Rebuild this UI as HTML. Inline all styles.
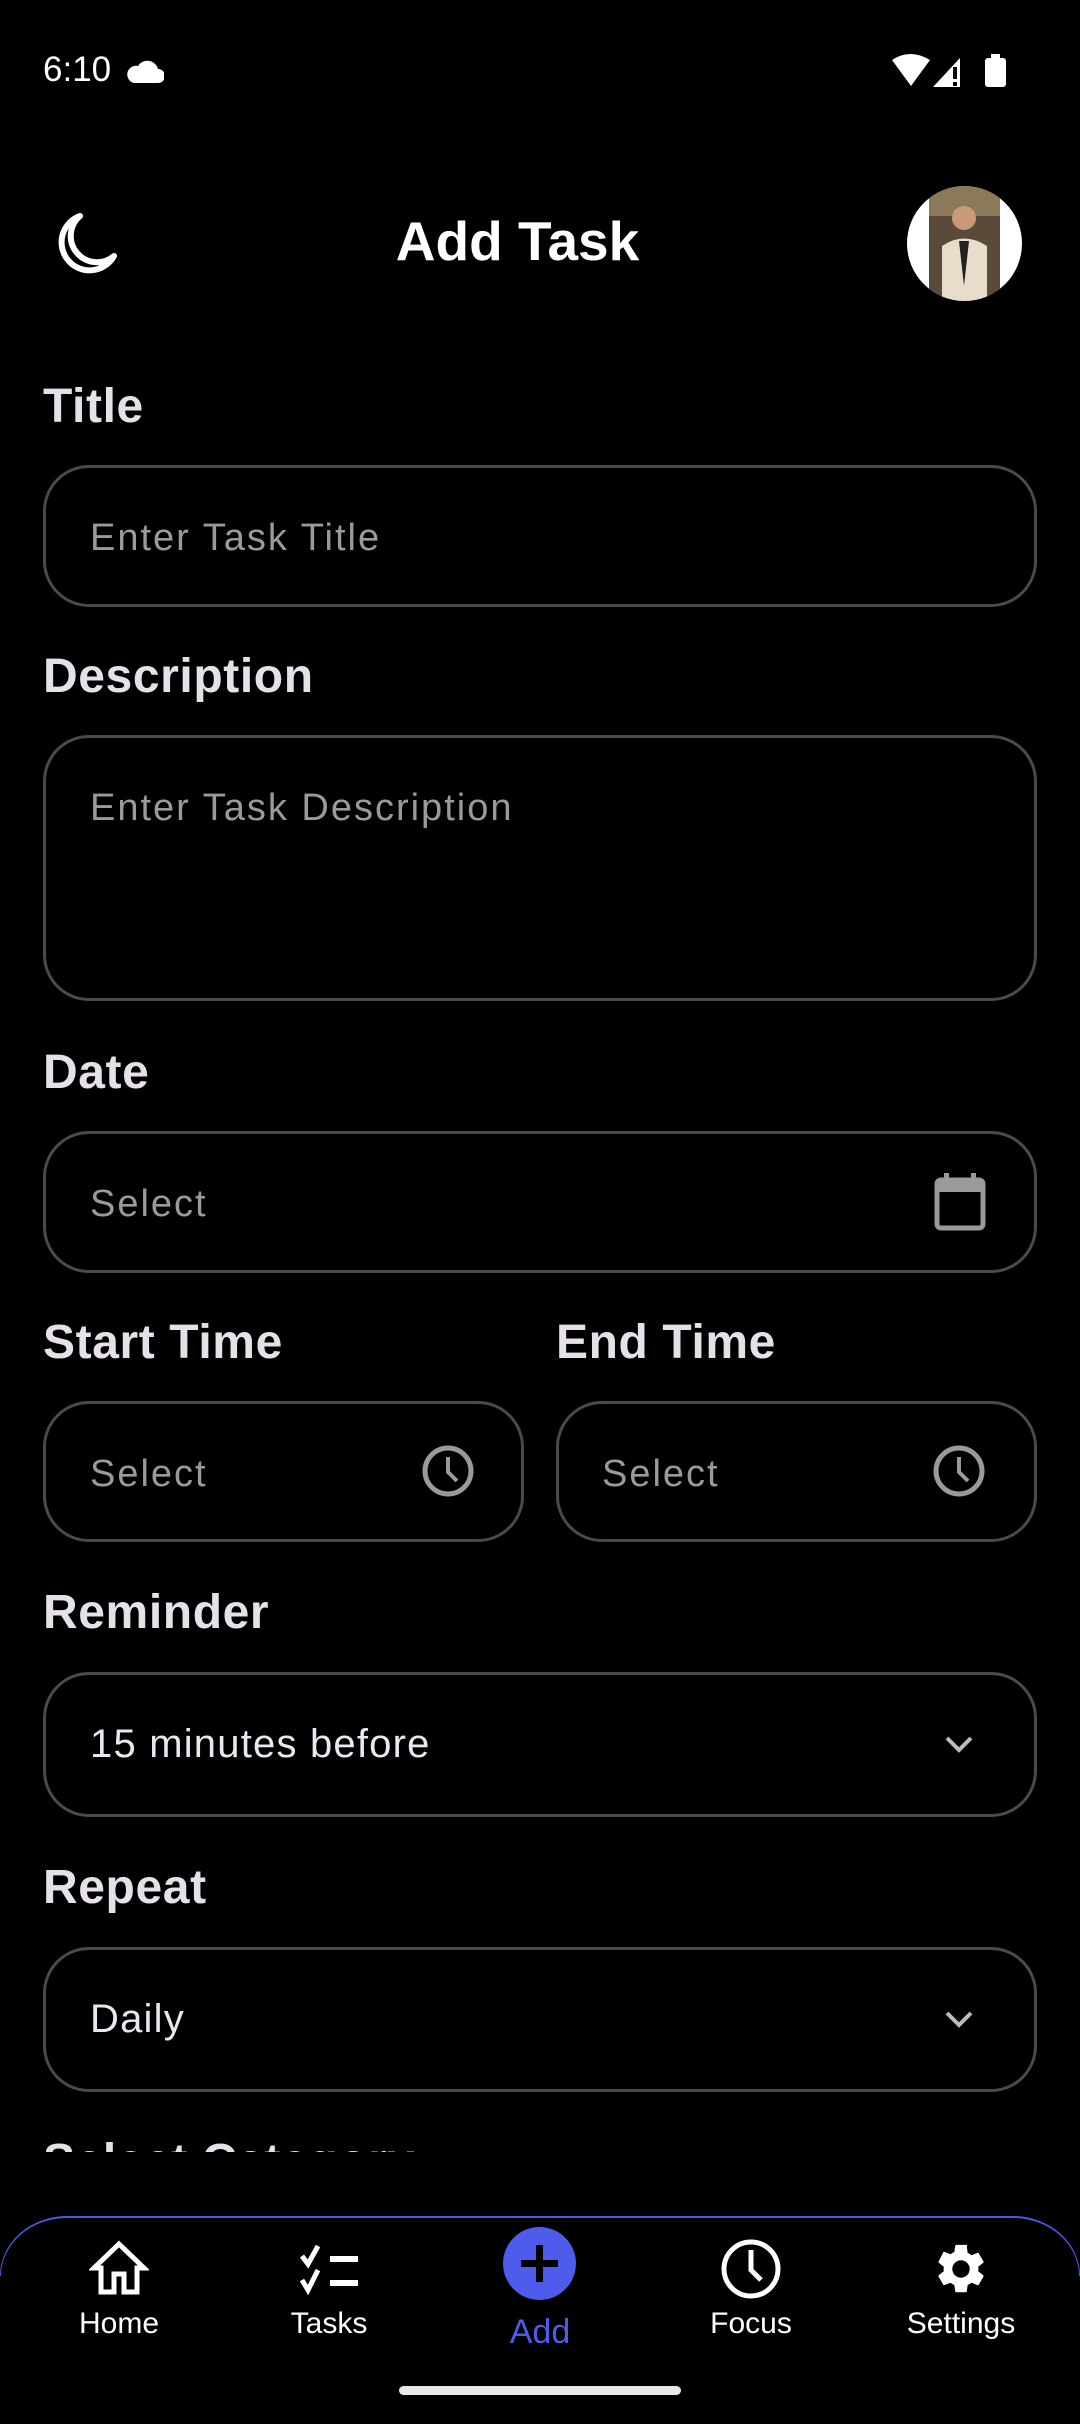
<!DOCTYPE html>
<html><head><meta charset="utf-8">
<style>
*{margin:0;padding:0;box-sizing:border-box}
body{width:1080px;height:2424px;background:#000;overflow:hidden;position:relative;font-family:"Liberation Sans",sans-serif;color:#fff}
.abs{position:absolute}
.lbl{position:absolute;left:43px;font-size:48px;font-weight:bold;color:#e6e0e9;line-height:1;letter-spacing:0.6px}
.box{position:absolute;border:3px solid #4a4a4a;border-radius:46px}
.ph{position:absolute;font-size:38px;color:#9a9a9a;line-height:1;letter-spacing:2px}
.val{position:absolute;font-size:40px;color:#ece6f0;line-height:1;letter-spacing:1.2px}
.nav{position:absolute;text-align:center;font-size:30px;color:#fff;width:200px;line-height:1}
</style></head><body>
<!-- status bar -->
<div class="abs" style="left:43px;top:52px;font-size:35px;line-height:1">6:10</div>
<svg class="abs" style="left:126px;top:58px" width="38" height="26" viewBox="0 0 38 26"><path d="M8 25h24a7 7 0 0 0 0-14 11 11 0 0 0-20-3 8 8 0 0 0-4 17z" fill="#fff"/></svg>
<svg class="abs" style="left:890px;top:54px" width="120" height="34" viewBox="0 0 120 34"><path d="M2 6 Q20 -6 40 6 L21 32Z" fill="#fff"/><path d="M43 33 L70 4 V33Z" fill="#fff"/><rect x="63" y="13" width="4" height="12" fill="#000"/><rect x="63" y="28" width="4" height="4" fill="#000"/><rect x="95" y="4" width="21" height="29" rx="3" fill="#fff"/><rect x="101" y="0" width="9" height="5" fill="#fff"/></svg>
<!-- header -->
<svg class="abs" style="left:50px;top:208px" width="72" height="72" viewBox="0 0 72 72"><path d="M30 8 A28 28 0 1 0 64 48 A24 24 0 0 1 30 8Z" fill="none" stroke="#fff" stroke-width="6" stroke-linejoin="round"/></svg>
<div class="abs" style="left:0;width:1035px;text-align:center;top:214px;font-size:55px;font-weight:bold;line-height:1">Add Task</div>
<div class="abs" style="left:907px;top:186px;width:115px;height:115px;border-radius:50%;background:#fff;overflow:hidden">
<svg width="115" height="115" viewBox="0 0 115 115"><rect x="22" y="0" width="71" height="115" fill="#5a4a3a"/><rect x="22" y="0" width="71" height="30" fill="#8a7a5a"/><circle cx="57" cy="32" r="12" fill="#c99a7a"/><path d="M35 115 V60 Q57 45 80 60 V115Z" fill="#e8dccb"/><path d="M52 55 L57 100 L62 55Z" fill="#222"/></svg></div>
<!-- Title -->
<div class="lbl" style="top:383px">Title</div>
<div class="box" style="left:43px;top:465px;width:994px;height:142px"></div>
<div class="ph" style="left:90px;top:519px">Enter Task Title</div>
<!-- Description -->
<div class="lbl" style="top:653px">Description</div>
<div class="box" style="left:43px;top:735px;width:994px;height:266px"></div>
<div class="ph" style="left:90px;top:789px">Enter Task Description</div>
<!-- Date -->
<div class="lbl" style="top:1049px">Date</div>
<div class="box" style="left:43px;top:1131px;width:994px;height:142px"></div>
<div class="ph" style="left:90px;top:1185px">Select</div>
<svg class="abs" style="left:932px;top:1172px" width="56" height="60" viewBox="0 0 56 60"><rect x="5" y="8" width="46" height="48" rx="4" fill="none" stroke="#9a9a9a" stroke-width="5"/><rect x="5" y="8" width="46" height="12" fill="#9a9a9a"/><rect x="12" y="1" width="5" height="10" fill="#9a9a9a"/><rect x="39" y="1" width="5" height="10" fill="#9a9a9a"/></svg>
<!-- Times -->
<div class="lbl" style="top:1319px">Start Time</div>
<div class="lbl" style="top:1319px;left:556px">End Time</div>
<div class="box" style="left:43px;top:1401px;width:481px;height:141px"></div>
<div class="box" style="left:556px;top:1401px;width:481px;height:141px"></div>
<div class="ph" style="left:90px;top:1455px">Select</div>
<div class="ph" style="left:602px;top:1455px">Select</div>
<svg class="abs" style="left:420px;top:1443px" width="56" height="56" viewBox="0 0 56 56"><circle cx="28" cy="28" r="23" fill="none" stroke="#9a9a9a" stroke-width="5"/><path d="M28 14 V29 L37 38" fill="none" stroke="#9a9a9a" stroke-width="4"/></svg>
<svg class="abs" style="left:931px;top:1443px" width="56" height="56" viewBox="0 0 56 56"><circle cx="28" cy="28" r="23" fill="none" stroke="#9a9a9a" stroke-width="5"/><path d="M28 14 V29 L37 38" fill="none" stroke="#9a9a9a" stroke-width="4"/></svg>
<!-- Reminder -->
<div class="lbl" style="top:1589px">Reminder</div>
<div class="box" style="left:43px;top:1672px;width:994px;height:145px"></div>
<div class="val" style="left:90px;top:1724px">15 minutes before</div>
<svg class="abs" style="left:943px;top:1734px" width="32" height="20" viewBox="0 0 32 20"><path d="M4 4 L16 16 L28 4" fill="none" stroke="#bbb" stroke-width="4"/></svg>
<!-- Repeat -->
<div class="lbl" style="top:1864px">Repeat</div>
<div class="box" style="left:43px;top:1947px;width:994px;height:145px"></div>
<div class="val" style="left:90px;top:1999px">Daily</div>
<svg class="abs" style="left:943px;top:2009px" width="32" height="20" viewBox="0 0 32 20"><path d="M4 4 L16 16 L28 4" fill="none" stroke="#bbb" stroke-width="4"/></svg>
<!-- clipped category -->
<div class="abs" style="left:43px;top:2138px;height:14px;overflow:hidden"><div style="font-size:48px;font-weight:bold;color:#e6e0e9;line-height:1;letter-spacing:0.6px">Select Category</div></div>
<!-- nav bar -->
<div class="abs" style="left:0;top:2216px;width:1080px;height:60px;border-top:2px solid #4a5ae8;border-left:1px solid #4a5ae8;border-right:1px solid #4a5ae8;border-bottom:none;border-radius:67px 67px 0 0 / 60px 60px 0 0;background:#000"></div>
<svg class="abs" style="left:89px;top:2240px" width="60" height="56" viewBox="0 0 60 56"><path d="M30 4 L55 28 H48 V52 H35 V34 H25 V52 H12 V28 H5 Z" fill="none" stroke="#fff" stroke-width="5" stroke-linejoin="miter"/></svg>
<svg class="abs" style="left:298px;top:2244px" width="64" height="52" viewBox="0 0 64 52"><path d="M4 12 L10 20 L20 2 M4 36 L10 46 L20 26" fill="none" stroke="#fff" stroke-width="5"/><rect x="32" y="12" width="28" height="6" fill="#fff"/><rect x="32" y="36" width="28" height="6" fill="#fff"/></svg>
<div class="abs" style="left:503px;top:2227px;width:73px;height:73px;border-radius:50%;background:#4f5bea"></div>
<div class="abs" style="left:536px;top:2245px;width:7px;height:37px;background:#000"></div>
<div class="abs" style="left:521px;top:2260px;width:37px;height:7px;background:#000"></div>
<svg class="abs" style="left:720px;top:2238px" width="62" height="62" viewBox="0 0 62 62"><circle cx="31" cy="31" r="27" fill="none" stroke="#fff" stroke-width="5"/><path d="M31 12 V32 L41 42" fill="none" stroke="#fff" stroke-width="5"/></svg>
<svg class="abs" style="left:932px;top:2240px" width="58" height="58" viewBox="0 0 24 24"><path fill="#fff" d="M19.14 12.94c.04-.3.06-.61.06-.94s-.02-.64-.07-.94l2.03-1.58a.49.49 0 0 0 .12-.61l-1.920-3.32a.49.49 0 0 0-.59-.22l-2.39.96c-.5-.38-1.03-.7-1.62-.94l-.36-2.54A.48.48 0 0 0 13.92 2h-3.84c-.24 0-.43.17-.47.41l-.36 2.54c-.59.24-1.13.57-1.62.94l-2.39-.96a.48.48 0 0 0-.59.22L2.74 8.87c-.12.21-.08.47.12.61l2.030 1.58c-.05.3-.09.63-.09.94s.02.64.07.94l-2.03 1.58a.49.49 0 0 0-.12.61l1.92 3.32c.12.22.37.29.59.22l2.39-.96c.5.38 1.03.7 1.62.94l.36 2.54c.05.24.24.41.48.41h3.84c.24 0 .44-.17.47-.41l.36-2.54c.59-.24 1.13-.56 1.62-.94l2.39.96c.22.08.47 0 .59-.22l1.92-3.32c.12-.22.07-.47-.12-.61zM12 15.6A3.6 3.6 0 1 1 12 8.4a3.6 3.6 0 0 1 0 7.2z"/></svg>
<div class="nav" style="left:19px;top:2309px">Home</div>
<div class="nav" style="left:229px;top:2309px">Tasks</div>
<div class="nav" style="left:440px;top:2315px;color:#4f5bea;font-size:34px">Add</div>
<div class="nav" style="left:651px;top:2309px">Focus</div>
<div class="nav" style="left:861px;top:2309px">Settings</div>
<div class="abs" style="left:399px;top:2386px;width:282px;height:9px;border-radius:5px;background:#e8e8e8"></div>
</body></html>
